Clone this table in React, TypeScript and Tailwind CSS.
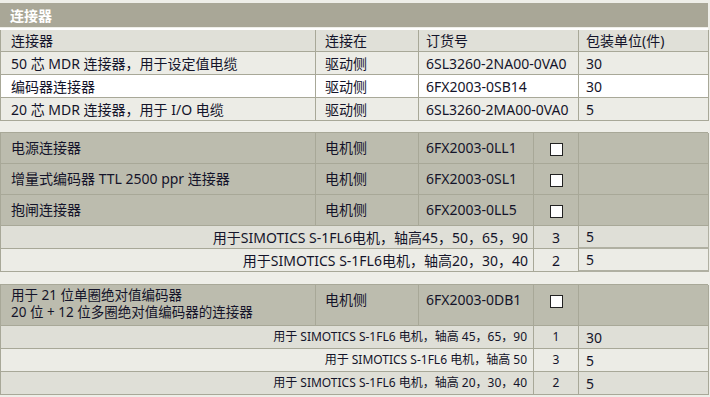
import React from "react";

const B = "border-[#a8a898]";
const font = { fontFamily: '"Noto Sans", "Noto Sans CJK SC", sans-serif' };

function Check() {
  return <div className="w-[13px] h-[13px] bg-white border border-[#222]" />;
}

export default function App() {
  const cell = `border-r border-b ${B} flex items-center`;
  const t1rows = [
    { a: "50 芯 MDR 连接器，用于设定值电缆", b: "驱动侧", c: "6SL3260-2NA00-0VA0", d: "30", bg: "bg-[#ececE6]" },
    { a: "编码器连接器", b: "驱动侧", c: "6FX2003-0SB14", d: "30", bg: "bg-white" },
    { a: "20 芯 MDR 连接器，用于 I/O 电缆", b: "驱动侧", c: "6SL3260-2MA00-0VA0", d: "5", bg: "bg-[#ececE6]" },
  ];
  const t2rows = [
    { a: "电源连接器", c: "6FX2003-0LL1" },
    { a: "增量式编码器 TTL 2500 ppr 连接器", c: "6FX2003-0SL1" },
    { a: "抱闸连接器", c: "6FX2003-0LL5" },
  ];
  const t2subs = [
    { t: "用于SIMOTICS S-1FL6电机，轴高45，50，65，90", n: "3", q: "5", bg: "bg-[#dfdfd7]" },
    { t: "用于SIMOTICS S-1FL6电机，轴高20，30，40", n: "2", q: "5", bg: "bg-[#ececE6]" },
  ];
  const t3subs = [
    { t: "用于 SIMOTICS S-1FL6 电机，轴高 45，65，90", n: "1", q: "30", bg: "bg-[#dfdfd7]" },
    { t: "用于 SIMOTICS S-1FL6 电机，轴高 50", n: "3", q: "5", bg: "bg-[#ececE6]" },
    { t: "用于 SIMOTICS S-1FL6 电机，轴高 20，30，40", n: "2", q: "5", bg: "bg-[#dfdfd7]" },
  ];
  return (
    <div className="w-[710px] h-[397px] bg-[#eeeee8] pt-[3px] text-[#14142a] text-[14px] overflow-hidden" style={font}>
      <div className="h-[24px] w-[708px] bg-[#a9a797] text-white font-bold text-[14px] px-[10px] flex items-center">连接器</div>
      <div className="h-[1px]" />
      <div className={`w-[708px] border-t-2 border-white`}>
        <div className={`grid grid-cols-[315px_103px_160px_130px] border-l ${B}`}>
          <div className={`${cell} h-[22px] bg-[#e0e0d8] pl-[10px]`}>连接器</div>
          <div className={`${cell} h-[22px] bg-[#e0e0d8] pl-[9px]`}>连接在</div>
          <div className={`${cell} h-[22px] bg-[#e0e0d8] pl-[7px]`}>订货号</div>
          <div className={`${cell} h-[22px] bg-[#e0e0d8] pl-[7px]`}>包装单位(件)</div>
          {t1rows.map((r, i) => (
            <React.Fragment key={i}>
              <div className={`${cell} h-[23px] ${r.bg} pl-[10px]`}>{r.a}</div>
              <div className={`${cell} h-[23px] ${r.bg} pl-[9px]`}>{r.b}</div>
              <div className={`${cell} h-[23px] ${r.bg} pl-[7px]`}>{r.c}</div>
              <div className={`${cell} h-[23px] ${r.bg} pl-[7px]`}>{r.d}</div>
            </React.Fragment>
          ))}
        </div>
      </div>

      <div className={`mt-[11px] w-[708px] border-t border-l ${B} grid grid-cols-[315px_103px_115px_45px_130px]`}>
        {t2rows.map((r, i) => (
          <React.Fragment key={i}>
            <div className={`border-r border-b ${B} h-[31px] bg-[#bcbcae] pl-[10px] pt-[4px]`}>{r.a}</div>
            <div className={`border-r border-b ${B} h-[31px] bg-[#bcbcae] pl-[9px] pt-[4px]`}>电机侧</div>
            <div className={`border-r border-b ${B} h-[31px] bg-[#bcbcae] pl-[7px] pt-[4px]`}>{r.c}</div>
            <div className={`border-r border-b ${B} h-[31px] bg-[#bcbcae] flex justify-center pt-[10px]`}><Check /></div>
            <div className={`border-r border-b ${B} h-[31px] bg-[#bcbcae]`} />
          </React.Fragment>
        ))}
        {t2subs.map((r, i) => (
          <React.Fragment key={i}>
            <div className={`col-span-3 border-r border-b ${B} h-[23px] ${r.bg} flex items-center justify-end pr-[5px]`}>{r.t}</div>
            <div className={`border-r border-b ${B} h-[23px] ${r.bg} flex items-center justify-center`}>{r.n}</div>
            <div className={`border-r border-b-2 border-[#b0b0a2] h-[23px] ${r.bg} flex items-center pl-[7px]`}>{r.q}</div>
          </React.Fragment>
        ))}
      </div>

      <div className={`mt-[12px] w-[708px] border-t border-l ${B} grid grid-cols-[315px_103px_115px_45px_130px]`}>
        <div className={`border-r border-b ${B} h-[41px] bg-[#bcbcae] pl-[10px] pt-[1px] text-[13.5px]`}>
          <div className="leading-[19px] h-[19px]">用于 21 位单圈绝对值编码器</div>
          <div className="leading-[19px] h-[19px] -mt-[2px]">20 位 + 12 位多圈绝对值编码器的连接器</div>
        </div>
        <div className={`border-r border-b ${B} h-[41px] bg-[#bcbcae] pl-[9px] pt-[4px]`}>电机侧</div>
        <div className={`border-r border-b ${B} h-[41px] bg-[#bcbcae] pl-[7px] pt-[4px]`}>6FX2003-0DB1</div>
        <div className={`border-r border-b ${B} h-[41px] bg-[#bcbcae] flex justify-center pt-[10px]`}><Check /></div>
        <div className={`border-r border-b ${B} h-[41px] bg-[#bcbcae]`} />
        {t3subs.map((r, i) => (
          <React.Fragment key={i}>
            <div className={`col-span-3 border-r border-b ${B} h-[23px] ${r.bg} flex items-center justify-end pr-[6px] text-[12px]`}>{r.t}</div>
            <div className={`border-r border-b ${B} h-[23px] ${r.bg} flex items-center justify-center text-[12px]`}>{r.n}</div>
            <div className={`border-r border-b ${B} h-[23px] ${r.bg} flex items-center pl-[7px]`}>{r.q}</div>
          </React.Fragment>
        ))}
      </div>
    </div>
  );
}
